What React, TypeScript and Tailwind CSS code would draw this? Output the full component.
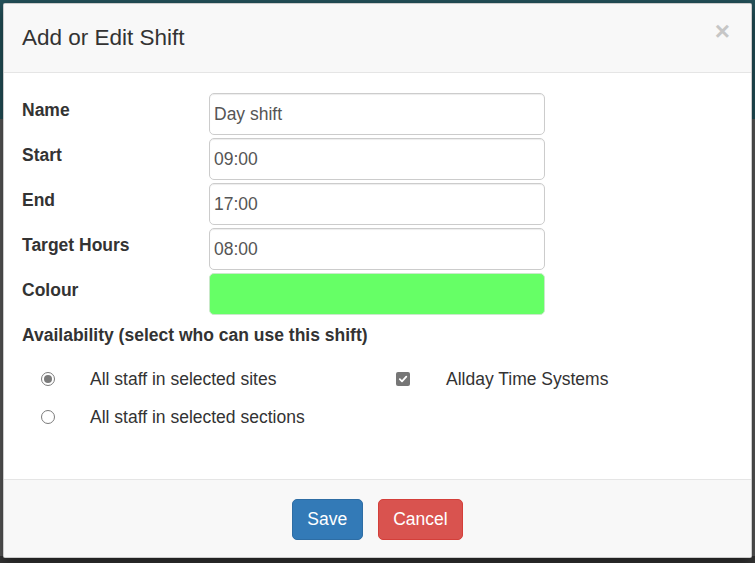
import React from "react";

const font = { fontFamily: '"Liberation Sans", Arial, sans-serif' };

function Row({ label, children }: { label: string; children: React.ReactNode }) {
  return (
    <div className="flex h-[42px]">
      <div className="w-[187px] shrink-0 pt-[5px] text-[17.5px] leading-[25px] font-bold text-[#333]">{label}</div>
      {children}
    </div>
  );
}

function TextInput({ value }: { value: string }) {
  return (
    <div className="w-[336px] h-[42px] border border-[#cccccc] rounded-[5px] bg-white flex items-center pl-[4px] text-[17.5px] text-[#555] shadow-[inset_0_1px_1px_rgba(0,0,0,0.075)]">
      {value}
    </div>
  );
}

export default function App() {
  return (
    <div
      className="w-[755px] h-[563px] overflow-hidden pl-[3px] pt-[3px] bg-[linear-gradient(to_bottom,#24525b_0px,#24525b_119px,#5a5a5a_119px,#5a5a5a_556px,#363636_556px)]"
      style={font}
    >
      <div className="w-[749px] h-[555px] bg-white flex flex-col rounded-[2px] border border-[rgba(0,0,0,0.2)] shadow-[0_5px_15px_rgba(0,0,0,0.5)] overflow-hidden">
        {/* Header */}
        <div className="h-[69px] shrink-0 bg-[#f8f8f8] border-b border-[#e5e5e5] flex items-center justify-between pl-[18px] pr-[21px]">
          <div className="text-[22.5px] text-[#333] leading-none">Add or Edit Shift</div>
          <div className="text-[26px] font-bold text-[#c6c6c6] leading-none -mt-[14px]">×</div>
        </div>
        {/* Body */}
        <div className="flex-1 bg-white pl-[18px] pt-[20px]">
          <div className="flex flex-col gap-[3px]">
            <Row label="Name"><TextInput value="Day shift" /></Row>
            <Row label="Start"><TextInput value="09:00" /></Row>
            <Row label="End"><TextInput value="17:00" /></Row>
            <Row label="Target Hours"><TextInput value="08:00" /></Row>
            <Row label="Colour">
              <div className="w-[336px] h-[42px] border border-[#c9e9c9] rounded-[5px] bg-[#66ff66]" />
            </Row>
          </div>
          <div className="mt-[8px] text-[17.5px] leading-[25px] font-bold text-[#333]">
            Availability (select who can use this shift)
          </div>
          <div className="mt-[12px] flex">
            <div className="w-[374px] flex flex-col">
              <div className="h-[38px] flex items-center">
                <div className="w-[14px] h-[14px] ml-[19px] rounded-full border border-[#7b7b7b] bg-white flex items-center justify-center">
                  <div className="w-[8px] h-[8px] rounded-full bg-[#7b7b7b]" />
                </div>
                <span className="ml-[35px] text-[17.5px] text-[#333]">All staff in selected sites</span>
              </div>
              <div className="h-[38px] flex items-center">
                <div className="w-[14px] h-[14px] ml-[19px] rounded-full border border-[#7b7b7b] bg-white" />
                <span className="ml-[35px] text-[17.5px] text-[#333]">All staff in selected sections</span>
              </div>
            </div>
            <div className="flex flex-col">
              <div className="h-[38px] flex items-center">
                <div className="w-[14px] h-[14px] rounded-[2px] bg-[#767676] flex items-center justify-center">
                  <svg width="10" height="10" viewBox="0 0 10 10">
                    <path d="M1.8 5.2 L4 7.3 L8.3 2.6" fill="none" stroke="white" strokeWidth="1.8" strokeLinecap="round" strokeLinejoin="round" />
                  </svg>
                </div>
                <span className="ml-[36px] text-[17.5px] text-[#333]">Allday Time Systems</span>
              </div>
            </div>
          </div>
        </div>
        {/* Footer */}
        <div className="h-[78px] shrink-0 bg-[#f8f8f8] border-t border-[#e5e5e5] flex items-start justify-center gap-[15px] pt-[19px]">
          <button className="h-[41px] px-[14.5px] rounded-[5px] border border-[#2e6da4] bg-[#337ab7] text-white text-[17.5px]">
            Save
          </button>
          <button className="h-[41px] px-[14.5px] rounded-[5px] border border-[#d43f3a] bg-[#d9534f] text-white text-[17.5px]">
            Cancel
          </button>
        </div>
      </div>
    </div>
  );
}
